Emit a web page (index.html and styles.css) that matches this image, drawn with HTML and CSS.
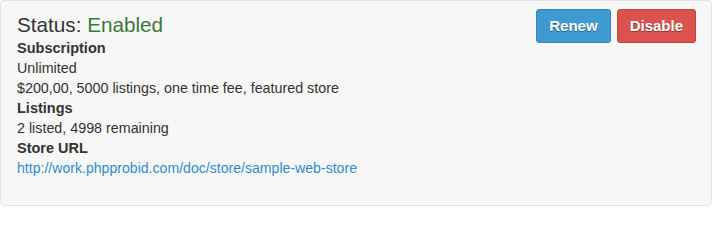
FILE: index.html
```html
<!DOCTYPE html>
<html>
<head>
<meta charset="utf-8">
<link rel="stylesheet" href="styles.css">
</head>
<body>
<div class="well">
  <div class="actions">
    <button class="btn btn-info">Renew</button>
    <button class="btn btn-danger">Disable</button>
  </div>
  <div class="info">
    <h4 class="status">Status: <span class="enabled">Enabled</span></h4>
    <dl>
      <dt>Subscription</dt>
      <dd>Unlimited</dd>
      <dd>$200,00, 5000 listings, one time fee, featured store</dd>
      <dt>Listings</dt>
      <dd>2 listed, 4998 remaining</dd>
      <dt>Store URL</dt>
      <dd><a class="store-link" href="#">http://work.phpprobid.com/doc/store/sample-web-store</a></dd>
    </dl>
  </div>
</div>
</body>
</html>
```
FILE: styles.css
```css
html, body {
  margin: 0;
  padding: 0;
  background: #ffffff;
}
body {
  font-family: "Liberation Sans", Arial, sans-serif;
  font-size: 14.3px;
  line-height: 20px;
  color: #333333;
}
.well {
  width: 712px;
  height: 206px;
  box-sizing: border-box;
  background: #f7f7f7;
  border: 1px solid #e3e3e3;
  border-radius: 4px;
  padding: 10px 15px 10px 16px;
  display: flex;
  flex-direction: row-reverse;
  justify-content: space-between;
  align-items: flex-start;
}
.status {
  margin: 0;
  font-size: 20.7px;
  font-weight: normal;
  line-height: 27px;
  color: #333333;
}
.enabled {
  color: #3c763d;
}
dl {
  margin: 0;
}
dt {
  font-weight: bold;
  font-size: 14.5px;
}
dd {
  margin: 0;
}
.store-link {
  color: #2f8dce;
  font-size: 14.1px;
  text-decoration: none;
}
.actions {
  display: flex;
  gap: 6px;
  margin-top: -2px;
}
.btn {
  font-family: "Liberation Sans", Arial, sans-serif;
  font-size: 15px;
  font-weight: bold;
  line-height: 20px;
  padding: 6px 12px;
  border-radius: 3px;
  color: #ffffff;
  text-shadow: 0 1px 1px rgba(0, 0, 0, 0.4);
  cursor: pointer;
}
.btn-info {
  background: #409ad2;
  border: 1px solid #3986bd;
}
.btn-danger {
  background: #d9534f;
  border: 1px solid #c7423e;
}
```
